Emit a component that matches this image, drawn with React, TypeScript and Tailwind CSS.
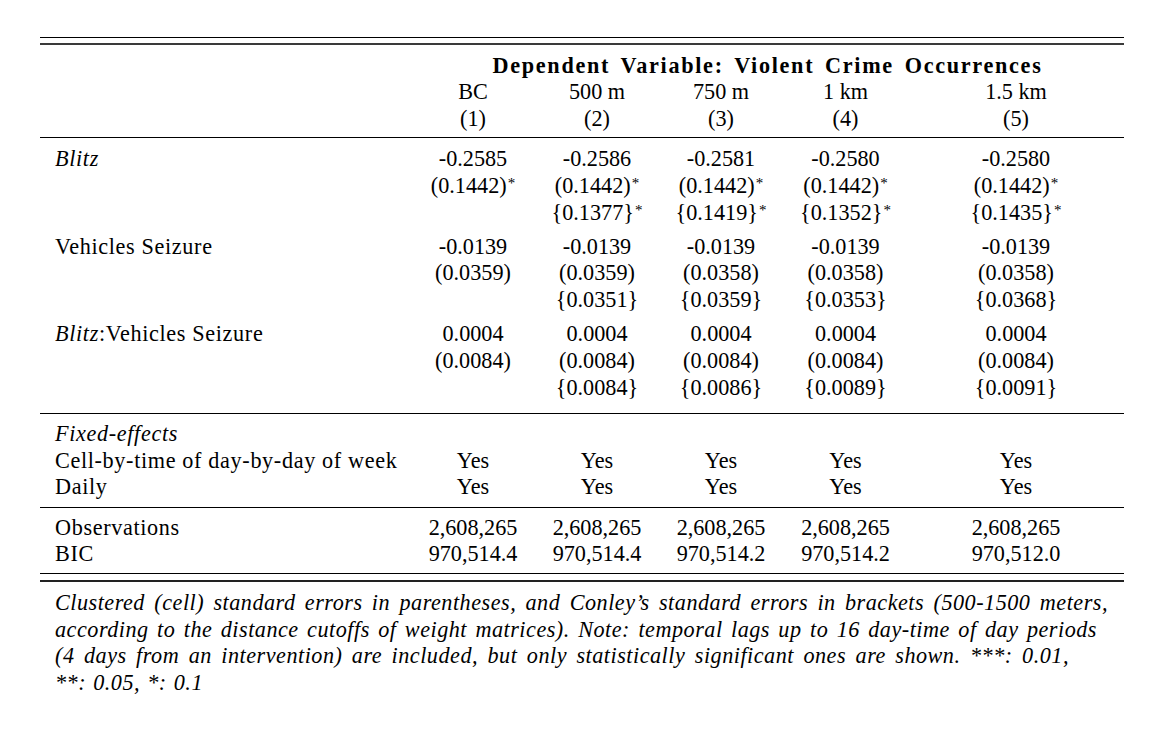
import React from "react";

const Star = () => (
  <span className="relative top-[-5px] ml-[1px] text-[15px] leading-none">*</span>
);

function Val({ s }: { s: string }) {
  if (s.endsWith("*")) {
    return (
      <div className="whitespace-nowrap">
        {s.slice(0, -1)}
        <Star />
      </div>
    );
  }
  return <div className="whitespace-nowrap">{s}</div>;
}

type Group = { label: React.ReactNode; cols: string[][] };

const groups: Group[] = [
  {
    label: <span className="italic">Blitz</span>,
    cols: [
      ["-0.2585", "(0.1442)*"],
      ["-0.2586", "(0.1442)*", "{0.1377}*"],
      ["-0.2581", "(0.1442)*", "{0.1419}*"],
      ["-0.2580", "(0.1442)*", "{0.1352}*"],
      ["-0.2580", "(0.1442)*", "{0.1435}*"],
    ],
  },
  {
    label: <span>Vehicles Seizure</span>,
    cols: [
      ["-0.0139", "(0.0359)"],
      ["-0.0139", "(0.0359)", "{0.0351}"],
      ["-0.0139", "(0.0358)", "{0.0359}"],
      ["-0.0139", "(0.0358)", "{0.0353}"],
      ["-0.0139", "(0.0358)", "{0.0368}"],
    ],
  },
  {
    label: (
      <span>
        <span className="italic">Blitz</span>:Vehicles Seizure
      </span>
    ),
    cols: [
      ["0.0004", "(0.0084)"],
      ["0.0004", "(0.0084)", "{0.0084}"],
      ["0.0004", "(0.0084)", "{0.0086}"],
      ["0.0004", "(0.0084)", "{0.0089}"],
      ["0.0004", "(0.0084)", "{0.0091}"],
    ],
  },
];

const GRID = "grid grid-cols-[371px_124px_124px_124px_125px_216px]";

function GroupRow({ g, className }: { g: Group; className: string }) {
  return (
    <div className={`${GRID} ${className}`}>
      <div className="pl-[15px] tracking-[0.65px] whitespace-nowrap">{g.label}</div>
      {g.cols.map((c, i) => (
        <div key={i} className="flex flex-col items-center">
          {c.map((s, j) => (
            <Val key={j} s={s} />
          ))}
        </div>
      ))}
    </div>
  );
}

function SimpleRow({ label, vals, italicLabel }: { label: string; vals: string[]; italicLabel?: boolean }) {
  return (
    <div className={GRID}>
      <div className={`pl-[15px] tracking-[0.65px] whitespace-nowrap ${italicLabel ? "italic" : ""}`}>{label}</div>
      {vals.map((v, i) => (
        <div key={i} className="text-center whitespace-nowrap">
          {v}
        </div>
      ))}
    </div>
  );
}

export default function App() {
  return (
    <div className="min-h-[732px] bg-white pt-[37px] pl-[40px] text-black font-['Liberation_Serif',serif] text-[22.2px] leading-[26.67px]">
      <div className="w-[1084px]">
        <div className="h-px bg-black" />
        <div className="mt-[5px] h-[2px] bg-[#3a3a3a]" />

        {/* header */}
        <div className={`${GRID} mt-[7.6px]`}>
          <div />
          <div className="col-span-5 flex justify-center">
            <div className="w-[550px] font-bold tracking-[1.7px] text-justify [text-align-last:justify]">
              Dependent Variable: Violent Crime Occurrences
            </div>
          </div>
          <div />
          {["BC", "500 m", "750 m", "1 km", "1.5 km"].map((h) => (
            <div key={h} className="text-center whitespace-nowrap">
              {h}
            </div>
          ))}
          <div />
          {["(1)", "(2)", "(3)", "(4)", "(5)"].map((h) => (
            <div key={h} className="text-center">
              {h}
            </div>
          ))}
        </div>

        <div className="mt-[4.4px] h-px bg-black" />

        <GroupRow g={groups[0]} className="mt-[8.24px]" />
        <GroupRow g={groups[1]} className="mt-[7.3px]" />
        <GroupRow g={groups[2]} className="mt-[7.7px]" />

        <div className="mt-[11.76px] h-px bg-black" />

        <div className="mt-[7.04px]">
          <SimpleRow label="Fixed-effects" vals={["", "", "", "", ""]} italicLabel />
          <SimpleRow label="Cell-by-time of day-by-day of week" vals={["Yes", "Yes", "Yes", "Yes", "Yes"]} />
          <SimpleRow label="Daily" vals={["Yes", "Yes", "Yes", "Yes", "Yes"]} />
        </div>

        <div className="mt-[5.96px] h-px bg-black" />

        <div className="mt-[6.54px]">
          <SimpleRow label="Observations" vals={["2,608,265", "2,608,265", "2,608,265", "2,608,265", "2,608,265"]} />
          <SimpleRow label="BIC" vals={["970,514.4", "970,514.4", "970,514.2", "970,514.2", "970,512.0"]} />
        </div>

        <div className="mt-[5.4px] h-px bg-black" />
        <div className="mt-[5.7px] h-[2px] bg-[#222]" />

        <div className="mt-[8px] pl-[15px] italic tracking-[0.5px]">
          <div className="w-[1053px] text-justify [text-align-last:justify]">
            Clustered (cell) standard errors in parentheses, and Conley’s standard errors in brackets (500-1500 meters,
          </div>
          <div className="w-[1042px] text-justify [text-align-last:justify]">
            according to the distance cutoffs of weight matrices). Note: temporal lags up to 16 day-time of day periods
          </div>
          <div className="w-[1014px] text-justify [text-align-last:justify]">
            (4 days from an intervention) are included, but only statistically significant ones are shown. ***: 0.01,
          </div>
          <div className="w-[148px] text-justify [text-align-last:justify]">**: 0.05, *: 0.1</div>
        </div>
      </div>
    </div>
  );
}
